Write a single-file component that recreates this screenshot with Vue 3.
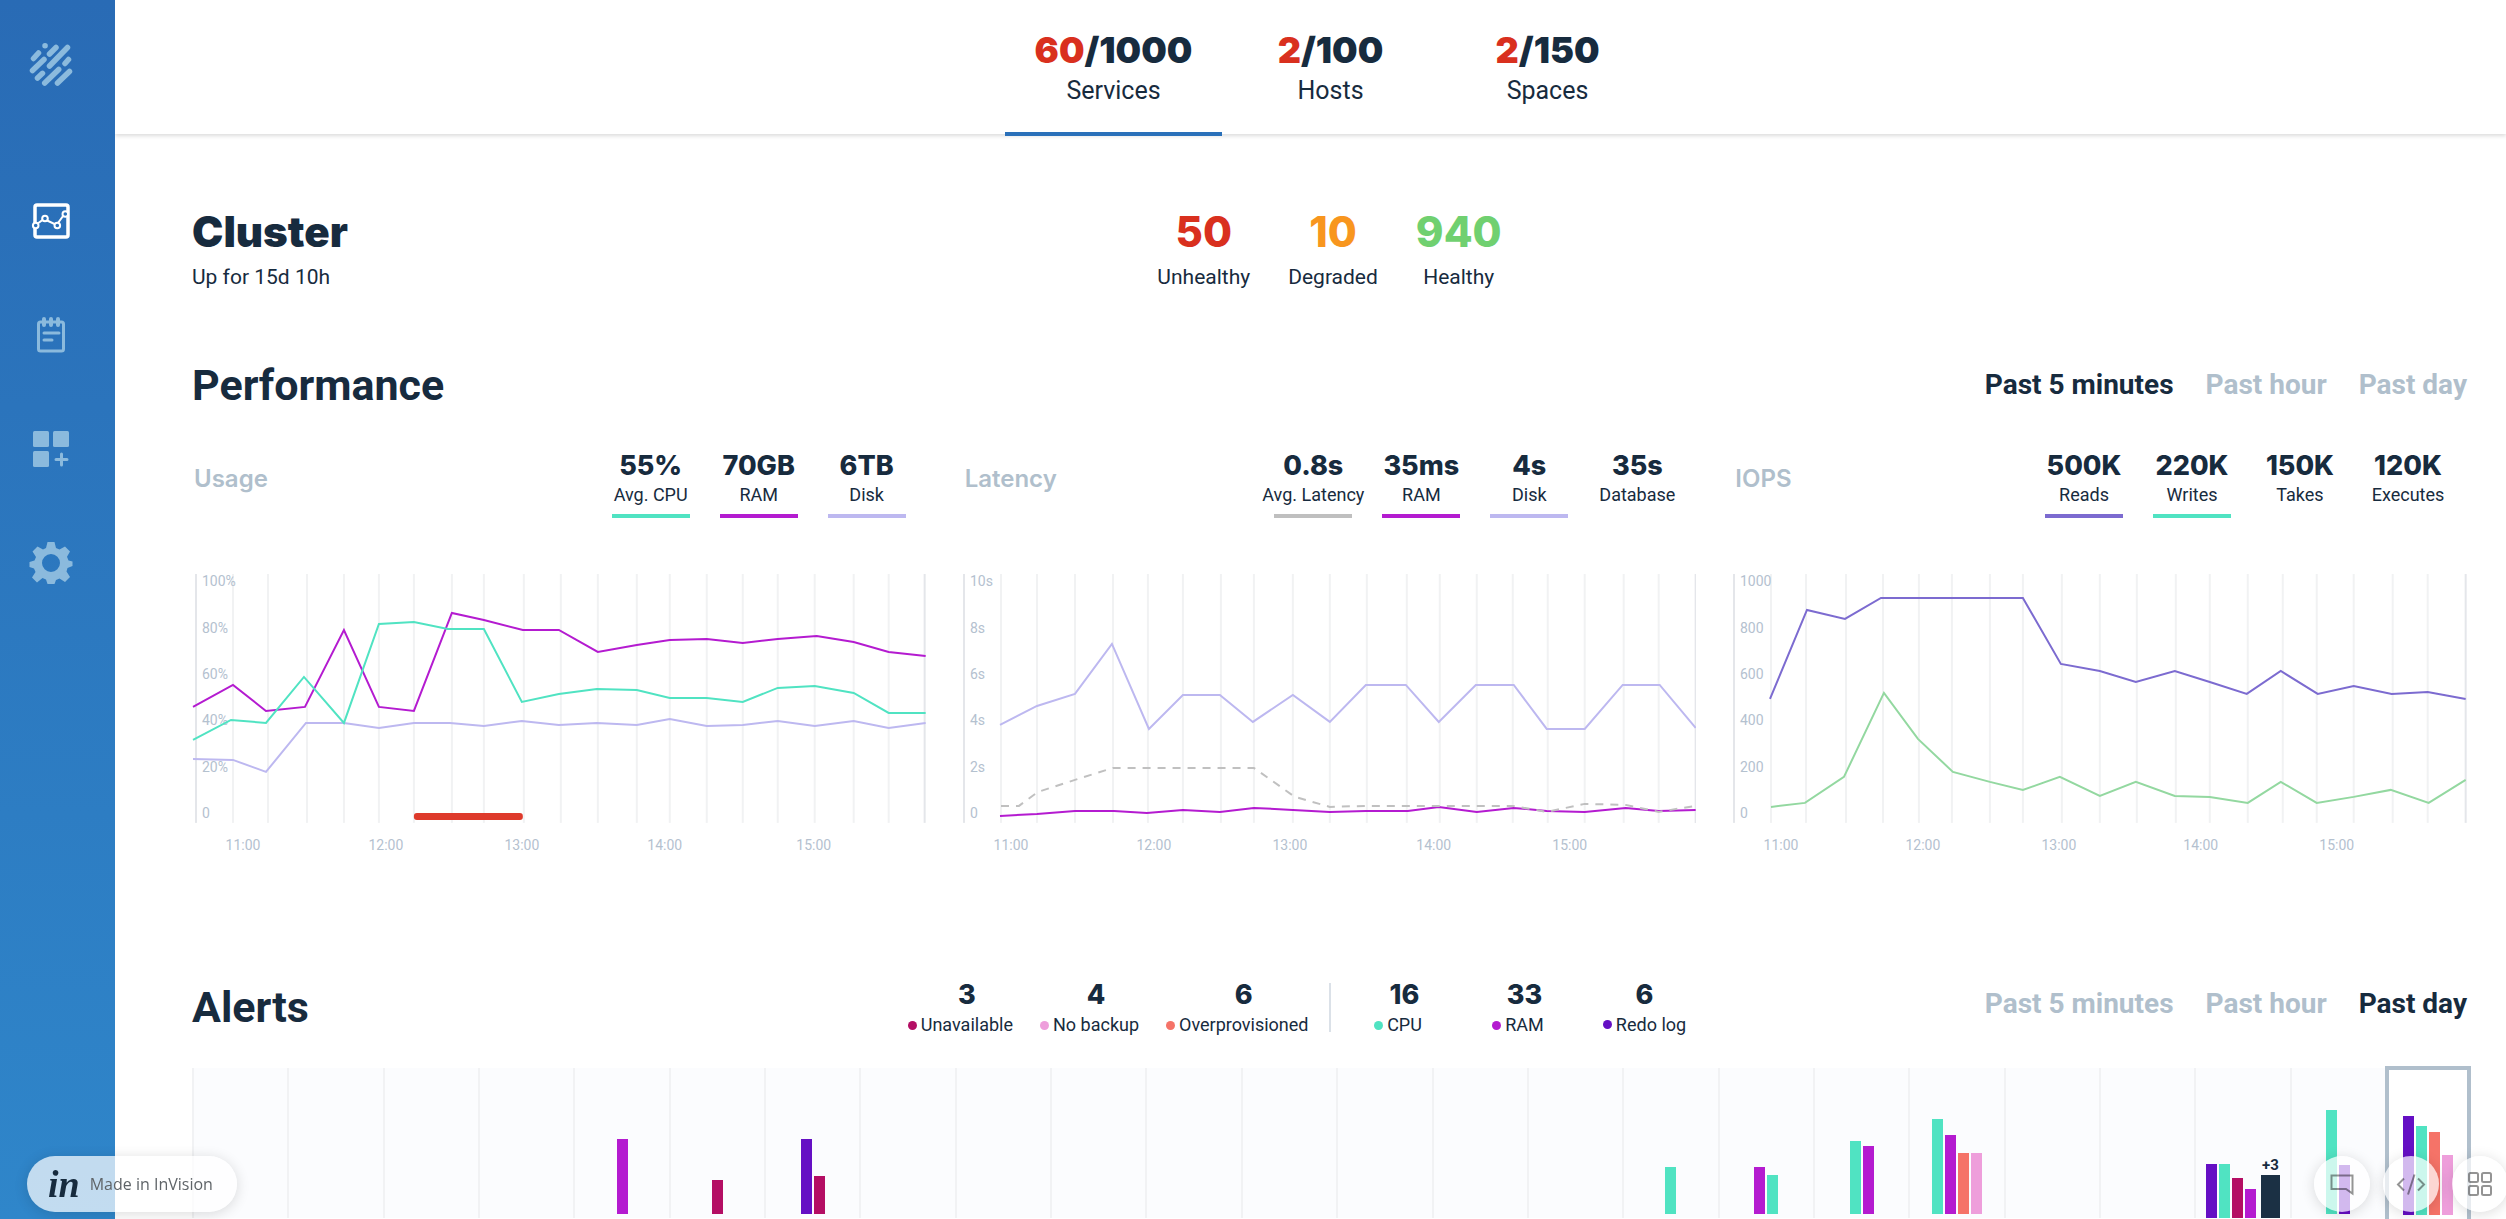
<script setup>
const menu = [
  { id: 'overview', label: 'Overview' },
  { id: 'dashboards', label: 'Dashboards' },
  { id: 'logs', label: 'Logs' },
  { id: 'widgets', label: 'Add widget' },
  { id: 'settings', label: 'Settings' },
]

const tabs = [
  { bad: 60, total: 1000, label: 'Services', active: true },
  { bad: 2, total: 100, label: 'Hosts' },
  { bad: 2, total: 150, label: 'Spaces' },
]

const health = [
  { value: 50, label: 'Unhealthy', tone: 'red' },
  { value: 10, label: 'Degraded', tone: 'orange' },
  { value: 940, label: 'Healthy', tone: 'green' },
]

const ranges = ['Past 5 minutes', 'Past hour', 'Past day']

const tickY = [15, 62, 108, 154, 201, 247]

const panels = [
  {
    title: 'Usage',
    stats: [
      { value: '55%', label: 'Avg. CPU', tone: 'teal' },
      { value: '70GB', label: 'RAM', tone: 'purple' },
      { value: '6TB', label: 'Disk', tone: 'lavender' },
    ],
    grid: [4, 41, 76, 115, 152, 187, 222, 260, 292, 332, 369, 406, 445, 478, 515, 551, 586, 623, 662, 697, 733],
    yTicks: ['100%', '80%', '60%', '40%', '20%', '0'],
    yX: 10,
    xTicks: [['11:00', 51], ['12:00', 194], ['13:00', 330], ['14:00', 473], ['15:00', 622]],
    incident: { x: 222, width: 109 },
    lines: [
      { tone: 'lavender', points: '1,188 41,189 74,201 114,152 152,152 187,157 222,152 258,152 292,155 330,150 367,154 405,152 445,154 478,148 515,155 551,154 586,150 623,155 662,150 697,157 734,152' },
      { tone: 'purple', points: '1,136 41,114 74,140 113,136 152,59 187,136 222,140 260,42 292,49 331,59 367,59 406,81 445,74 478,69 515,68 551,72 586,68 625,65 662,71 697,81 734,85' },
      { tone: 'teal', points: '1,169 39,149 74,152 112,106 152,152 187,53 222,51 256,58 292,58 330,131 367,123 405,118 445,119 478,127 515,127 551,131 586,117 623,115 662,122 697,142 734,142' },
    ],
  },
  {
    title: 'Latency',
    stats: [
      { value: '0.8s', label: 'Avg. Latency', tone: 'grey' },
      { value: '35ms', label: 'RAM', tone: 'purple' },
      { value: '4s', label: 'Disk', tone: 'lavender' },
      { value: '35s', label: 'Database', tone: 'none' },
    ],
    grid: [1, 38, 74, 112, 150, 185, 220, 258, 291, 330, 367, 404, 444, 477, 514, 550, 585, 622, 661, 696, 733],
    yTicks: ['10s', '8s', '6s', '4s', '2s', '0'],
    yX: 7,
    xTicks: [['11:00', 48], ['12:00', 191], ['13:00', 327], ['14:00', 471], ['15:00', 607]],
    lines: [
      { tone: 'lavender', points: '37,154 74,135 112,123 149,73 186,158 220,124 257,124 290,151 330,124 367,151 403,114 443,114 476,151 513,114 551,114 584,158 622,158 660,114 697,114 733,157' },
      { tone: 'purple', points: '37,245 74,243 112,240 151,240 184,242 220,239 257,241 291,237 330,239 367,241 403,240 445,240 476,236 514,241 551,237 584,240 622,241 663,237 696,240 733,239' },
      { tone: 'dashed', points: '38,235 56,235 75,221 112,209 150,197 291,197 332,226 367,236 403,235 445,235 550,235 584,241 622,233 663,234 696,241 733,235' },
    ],
  },
  {
    title: 'IOPS',
    stats: [
      { value: '500K', label: 'Reads', tone: 'violet' },
      { value: '220K', label: 'Writes', tone: 'teal' },
      { value: '150K', label: 'Takes', tone: 'none' },
      { value: '120K', label: 'Executes', tone: 'none' },
    ],
    grid: [1, 38, 73, 113, 150, 186, 219, 257, 290, 329, 367, 404, 443, 477, 515, 550, 584, 621, 660, 695, 733],
    yTicks: ['1000', '800', '600', '400', '200', '0'],
    yX: 7,
    xTicks: [['11:00', 48], ['12:00', 190], ['13:00', 326], ['14:00', 468], ['15:00', 604]],
    lines: [
      { tone: 'violet', points: '37,128 74,39 112,48 148,27 290,27 328,93 367,100 403,111 442,100 477,111 514,123 548,100 585,123 621,115 659,123 695,121 733,128' },
      { tone: 'green', points: '38,236 72,232 111,206 151,122 185,168 220,201 257,211 290,219 327,206 367,225 403,211 442,225 477,226 515,232 548,211 584,232 621,226 658,219 696,232 733,209' },
    ],
  },
]

const causes = [
  { value: 3, label: 'Unavailable', tone: 'crimson' },
  { value: 4, label: 'No backup', tone: 'pink' },
  { value: 6, label: 'Overprovisioned', tone: 'coral' },
]

const resources = [
  { value: 16, label: 'CPU', tone: 'teal' },
  { value: 33, label: 'RAM', tone: 'purple' },
  { value: 6, label: 'Redo log', tone: 'indigo', inline: true },
]

const alerts = {
  4: [['purple', 75]],
  5: [['crimson', 34]],
  6: [['indigo', 75], ['crimson', 38]],
  15: [['teal', 47]],
  16: [['purple', 47], ['teal', 39]],
  17: [['teal', 73], ['purple', 68]],
  18: [['teal', 95], ['purple', 79], ['coral', 61], ['pink', 61]],
  21: [['indigo', 54], ['teal', 54], ['crimson', 40], ['purple', 29]],
  22: [['teal', 104], ['indigo', 49]],
}
const hours = Array.from({ length: 23 }, (_, i) => ({
  bars: alerts[i] ?? [],
  more: i === 21 ? '+3' : '',
}))
const current = [['indigo', 99], ['teal', 89], ['coral', 83], ['pink', 60]]
</script>

<template>
  <div class="app">
    <nav class="sidebar" aria-label="Main">
      <a v-for="item in menu" :key="item.id" href="#" :class="['menu-link', item.id]" :aria-label="item.label">
        <svg v-if="item.id === 'overview'" width="44" height="44" viewBox="0 0 44 44" fill="none" stroke="currentColor" stroke-width="5.500" stroke-linecap="round">
          <path d="M16 3.700h.1M4.500 16.500l5-5.500M20.500 12 27 5.500M20.500 24 38.500 5.500M3.500 28.500 15 17.500M36 21.500l3.500-4M8.500 36l5-4.700M15.700 41 29.700 27.500M28.500 41 40.500 29.500" />
        </svg>
        <svg v-else-if="item.id === 'dashboards'" width="40" height="38" viewBox="0 0 40 38" fill="none" stroke="currentColor">
          <rect x="4" y="3" width="33" height="32" rx="2" stroke-width="3.500" />
          <path d="m6 22 7-5 12.500 6 8-11" stroke-width="2" />
          <g class="knots" stroke-width="2">
            <circle cx="4.700" cy="23.500" r="2.800" /><circle cx="14" cy="16.500" r="2.800" />
            <circle cx="26.300" cy="23.500" r="2.800" /><circle cx="34.300" cy="12" r="2.800" />
          </g>
        </svg>
        <svg v-else-if="item.id === 'logs'" width="40" height="38" viewBox="0 0 40 38" fill="none" stroke="currentColor" stroke-linecap="round">
          <rect x="7.500" y="6" width="25" height="29" rx="2" stroke-width="3" />
          <path d="M13 3v6M20 3v6M27 3v6" stroke-width="4" />
          <path d="M13 17h15M13 24h8" stroke-width="3" />
        </svg>
        <svg v-else-if="item.id === 'widgets'" width="40" height="38" viewBox="0 0 40 38" fill="currentColor">
          <rect x="2" y="1" width="16" height="16" rx="1.500" /><rect x="22" y="1" width="16" height="16" rx="1.500" />
          <rect x="2" y="21" width="16" height="16" rx="1.500" />
          <path d="M30.500 24v11M25 29.500h11" stroke="currentColor" stroke-width="3" stroke-linecap="round" />
        </svg>
        <svg v-else width="44" height="44" viewBox="0 0 44 44" fill="currentColor" fill-rule="evenodd">
          <path d="M18.500 1h7l1.500 6 3.500 1.500L36 5.500l5 5-3 5.300 1.500 3.700 4 1v4.500l-5 2-1 3.500 3.500 5.500-5 5-5.500-3.500-3.500 1.500-1.500 4h-7l-1.500-4.500-3.500-1.500L8 41.500l-5-5L6.500 31 5 27.500l-4.500-1.500v-5l5-1.500L7 16 3.500 10.500l5-5L14 8.500 17 7zM22 13a9 9 0 1 0 0 18 9 9 0 0 0 0-18z" />
        </svg>
      </a>
    </nav>

    <div class="page">
      <header class="topbar">
        <button v-for="tab in tabs" :key="tab.label" type="button" :class="['tab', { active: tab.active }]">
          <span class="tab-value"><span class="red">{{ tab.bad }}</span>/{{ tab.total }}</span>
          <span class="tab-label">{{ tab.label }}</span>
        </button>
      </header>

      <main>
        <section class="cluster">
          <div>
            <h1>Cluster</h1>
            <p class="uptime">Up for 15d 10h</p>
          </div>
          <div class="health">
            <div v-for="h in health" :key="h.label" class="health-item">
              <span :class="['health-value', h.tone]">{{ h.value }}</span>
              <span class="health-label">{{ h.label }}</span>
            </div>
          </div>
        </section>

        <section>
          <div class="section-head">
            <h2>Performance</h2>
            <div class="ranges">
              <button v-for="(r, i) in ranges" :key="r" type="button" :class="['range', { active: i === 0 }]">{{ r }}</button>
            </div>
          </div>
          <div class="panels">
            <article v-for="panel in panels" :key="panel.title" class="panel">
              <div class="panel-head">
                <h3>{{ panel.title }}</h3>
                <div class="stats">
                  <div v-for="s in panel.stats" :key="s.label" :class="['stat', s.tone]">
                    <span class="stat-value">{{ s.value }}</span>
                    <span class="stat-label">{{ s.label }}</span>
                  </div>
                </div>
              </div>
              <svg class="chart" viewBox="0 0 734 290" role="img" :aria-label="panel.title + ' chart'">
                <line v-for="(x, i) in panel.grid" :key="x" :class="['rule', { edge: i === 0 || i === 20 }]" :x1="x" :x2="x" y1="3" y2="252" />
                <text v-for="(t, i) in panel.yTicks" :key="t" :x="panel.yX" :y="tickY[i]">{{ t }}</text>
                <text v-for="t in panel.xTicks" :key="t[0]" class="x-tick" :x="t[1]" y="279">{{ t[0] }}</text>
                <polyline v-for="l in panel.lines" :key="l.tone" :class="['line', l.tone]" :points="l.points" />
                <rect v-if="panel.incident" class="incident" :x="panel.incident.x" y="242" :width="panel.incident.width" height="7" rx="3" />
              </svg>
            </article>
          </div>
        </section>

        <section class="alerts">
          <div class="alerts-head">
            <div class="alerts-left">
              <h2>Alerts</h2>
              <div class="causes">
                <div v-for="c in causes" :key="c.label" :class="['count', c.tone]">
                  <span class="stat-value">{{ c.value }}</span>
                  <span class="count-label"><i class="dot"></i>{{ c.label }}</span>
                </div>
              </div>
            </div>
            <div class="divider"></div>
            <div class="alerts-right">
              <div class="resources">
                <div v-for="c in resources" :key="c.label" :class="['count', c.tone, { inline: c.inline }]">
                  <span class="stat-value">{{ c.value }}</span>
                  <span class="count-label"><i class="dot"></i>{{ c.label }}</span>
                </div>
              </div>
              <div class="ranges">
                <button v-for="(r, i) in ranges" :key="r" type="button" :class="['range', { active: i === 2 }]">{{ r }}</button>
              </div>
            </div>
          </div>
          <div class="timeline">
            <div v-for="(h, i) in hours" :key="i" :class="['hour', { grouped: h.more }]">
              <div v-for="b in h.bars" :key="b[0]" :class="['bar', b[0]]" :style="{ height: b[1] + 'px' }"></div>
              <div v-if="h.more" class="more">
                <span>{{ h.more }}</span>
                <div class="more-bar"></div>
              </div>
            </div>
            <div class="hour current">
              <div v-for="b in current" :key="b[0]" :class="['bar', b[0]]" :style="{ height: b[1] + 'px' }"></div>
            </div>
          </div>
        </section>
      </main>
    </div>

    <a class="made-in" href="#"><span class="brand">in</span>Made in InVision</a>

    <div class="tools">
      <button type="button" aria-label="Comments">
        <svg width="26" height="26" viewBox="0 0 26 26" fill="none" stroke="currentColor" stroke-width="2">
          <path d="M2.500 4.500h21v18L17 18H2.500z" />
        </svg>
      </button>
      <button type="button" aria-label="Inspect">
        <svg width="30" height="24" viewBox="0 0 30 24" fill="none" stroke="currentColor" stroke-width="2">
          <path d="M8 6.500 2 12.500l6 6M22 6.500l6 6-6 6M18.500 2.500l-6.500 20" />
        </svg>
      </button>
      <button type="button" aria-label="Screens">
        <svg width="26" height="26" viewBox="0 0 26 26" fill="none" stroke="currentColor" stroke-width="2">
          <rect x="2" y="2" width="9" height="9" rx="1.500" /><rect x="15" y="2" width="9" height="9" rx="1.500" />
          <rect x="2" y="15" width="9" height="9" rx="1.500" /><rect x="15" y="15" width="9" height="9" rx="1.500" />
        </svg>
      </button>
    </div>
  </div>
</template>

<style>
body {
  margin: 0;
}
</style>

<style scoped>
.app {
  display: flex;
  min-height: 100vh;
  background: #fff;
  color: #172b3e;
  font-family: Roboto, "Liberation Sans", sans-serif;
}
h1, h2, h3, p {
  margin: 0;
}
button {
  padding: 0;
  border: 0;
  background: none;
  color: inherit;
  font: inherit;
  cursor: pointer;
}

.sidebar {
  flex: 0 0 115px;
  box-sizing: border-box;
  display: flex;
  flex-direction: column;
  align-items: center;
  gap: 70px;
  padding: 42px 13px 0 0;
  background: linear-gradient(#296bb5, #2f86ca);
}
.menu-link {
  display: flex;
  align-items: center;
  justify-content: center;
  width: 44px;
  height: 44px;
  color: #8bbadd;
}
.menu-link.overview {
  margin-bottom: 43px;
}
.menu-link.dashboards {
  color: #fff;
}
.knots {
  fill: #2a70b9;
}

.page {
  flex: 1;
  min-width: 0;
  overflow: hidden;
}
.topbar {
  display: flex;
  justify-content: center;
  height: 134px;
  padding: 0 37px 0 77px;
  box-shadow: 0 2px 4px rgba(0, 0, 0, 0.14);
}
.tab {
  display: flex;
  flex-direction: column;
  align-items: center;
  width: 217px;
  height: 136px;
  box-sizing: border-box;
  padding-top: 28px;
  border-bottom: 4px solid transparent;
}
.tab.active {
  border-color: #2a70b9;
}
.tab-value {
  font: 900 36px/44px Inter, sans-serif;
}
.tab-label {
  font-size: 25px;
  line-height: 38px;
}
.red { color: #d9301e; }
.orange { color: #f8961e; }
.health .green { color: #70d070; }

main {
  padding: 0 39px 0 77px;
}
.cluster {
  display: grid;
  grid-template-columns: 1fr auto 1fr;
  padding-top: 72px;
}
h1 {
  font: 900 42px/52px Inter, sans-serif;
}
.uptime, .health-label {
  font-size: 21px;
  line-height: 38px;
}
.health {
  display: flex;
  gap: 38px;
}
.health-item {
  display: flex;
  flex-direction: column;
  align-items: center;
}
.health-value {
  font: 800 42px/52px Inter, sans-serif;
}

.section-head {
  display: flex;
  justify-content: space-between;
  align-items: center;
  padding-top: 63px;
}
h2 {
  font-size: 43px;
  line-height: 52px;
  font-weight: 700;
}
.ranges {
  display: flex;
  gap: 32px;
}
.range {
  color: #b0bfcc;
  font-size: 28px;
  line-height: 34px;
  font-weight: 700;
}
.range.active {
  color: #172b3e;
}

.panels {
  display: grid;
  grid-template-columns: repeat(3, 1fr);
  gap: 37px;
  padding-top: 36px;
}
.panel-head {
  display: flex;
  justify-content: space-between;
  padding-right: 20px;
}
h3 {
  padding: 7px 0 0 2px;
  color: #b0bfcc;
  font: 600 24px/50px Inter, sans-serif;
}
.stats {
  display: flex;
  gap: 30px;
}
.stat {
  display: flex;
  flex-direction: column;
  align-items: center;
  box-sizing: border-box;
  width: 78px;
  height: 71px;
  padding-top: 2px;
  border-bottom: 4px solid;
  white-space: nowrap;
}
.stat-value {
  color: #172b3e;
  font: 800 27px/34px Inter, sans-serif;
}
.stat-label, .count-label {
  color: #172b3e;
  font-size: 18px;
  line-height: 24px;
}
.stat.none { border-color: transparent; }
.stat.grey { border-color: #bfbfbf; }

.teal { color: #50e3c2; }
.purple { color: #b41bd0; }
.lavender { color: #bdb8f0; }
.violet { color: #7c6bd0; }
.green { color: #93d8a0; }
.crimson { color: #b40e64; }
.pink { color: #ee9edb; }
.coral { color: #f57368; }
.indigo { color: #650fc4; }

.chart {
  display: block;
  width: 100%;
  margin-top: 53px;
}
.chart text {
  fill: #b4c1cf;
  font-size: 14px;
}
.chart .x-tick {
  text-anchor: middle;
}
.rule {
  stroke: #f1f2f3;
  stroke-width: 2;
}
.rule.edge {
  stroke: #e4e6ea;
}
.line {
  fill: none;
  stroke: currentColor;
  stroke-width: 2;
}
.dashed {
  color: #c0c0c0;
  stroke-dasharray: 8 7;
}
.incident {
  fill: #de3a2b;
}

.alerts-head {
  display: grid;
  grid-template-columns: 1fr 2px 1fr;
  align-items: center;
  padding-top: 118px;
}
.alerts-left, .alerts-right {
  display: flex;
  justify-content: space-between;
}
.alerts-left {
  padding-right: 20px;
}
.alerts-left h2 {
  padding-top: 2px;
}
.alerts-right .ranges {
  margin-bottom: 8px;
}
.causes {
  display: flex;
  gap: 40px;
}
.divider {
  height: 49px;
  background: #dbe1e8;
}
.resources {
  display: flex;
  padding-left: 14px;
}
.resources .count {
  width: 120px;
}
.count {
  display: flex;
  flex-direction: column;
  align-items: center;
}
.count .stat-value {
  line-height: 31px;
}
.count-label {
  position: relative;
  margin-top: 3px;
}
.dot {
  position: absolute;
  top: 8px;
  left: -13px;
  width: 9px;
  height: 9px;
  border-radius: 50%;
}
.crimson .dot { background: #b40e64; }
.pink .dot { background: #ee9edb; }
.coral .dot { background: #f57368; }
.teal .dot { background: #50e3c2; }
.purple .dot { background: #b41bd0; }
.indigo .dot { background: #650fc4; }
.inline .dot {
  display: inline-block;
  position: static;
  margin-right: 4px;
  vertical-align: 2px;
}

.timeline {
  display: grid;
  grid-template-columns: repeat(23, 1fr) 86px;
  grid-template-rows: 150px;
  margin: 31px -4px 0 0;
}
.hour {
  display: flex;
  justify-content: center;
  align-items: flex-end;
  gap: 2px;
  box-sizing: border-box;
  padding-bottom: 4px;
  border-left: 2px solid #f1f2f4;
  background: #fbfcfe;
}
.hour.grouped {
  padding-bottom: 0;
}
.bar {
  width: 11px;
  background: currentColor;
}
.more {
  margin-left: 3px;
  width: 19px;
  font-size: 15px;
  line-height: 20px;
  font-weight: 700;
  text-align: center;
}
.more-bar {
  height: 43px;
  background: #1b3044;
}
.current {
  height: 157px;
  margin-top: -2px;
  border: 4px solid #b0bfcc;
  background: #fff;
}

.made-in, .tools button {
  height: 56px;
  border-radius: 28px;
  background: rgba(255, 255, 255, 0.71);
  box-shadow: 0 2px 14px rgba(0, 0, 0, 0.14);
}
.made-in {
  position: fixed;
  bottom: 7px;
  left: 27px;
  display: flex;
  align-items: center;
  gap: 10px;
  padding: 0 24px 0 21px;
  color: #5f6468;
  font: 16px "Open Sans", sans-serif;
  text-decoration: none;
}
.brand {
  color: #172b3e;
  font: italic 700 38px/40px "Liberation Serif", serif;
}
.tools {
  position: fixed;
  right: -2px;
  bottom: 7px;
  display: flex;
  gap: 13px;
}
.tools button {
  display: flex;
  align-items: center;
  justify-content: center;
  width: 56px;
  color: rgba(0, 0, 0, 0.42);
}
</style>
